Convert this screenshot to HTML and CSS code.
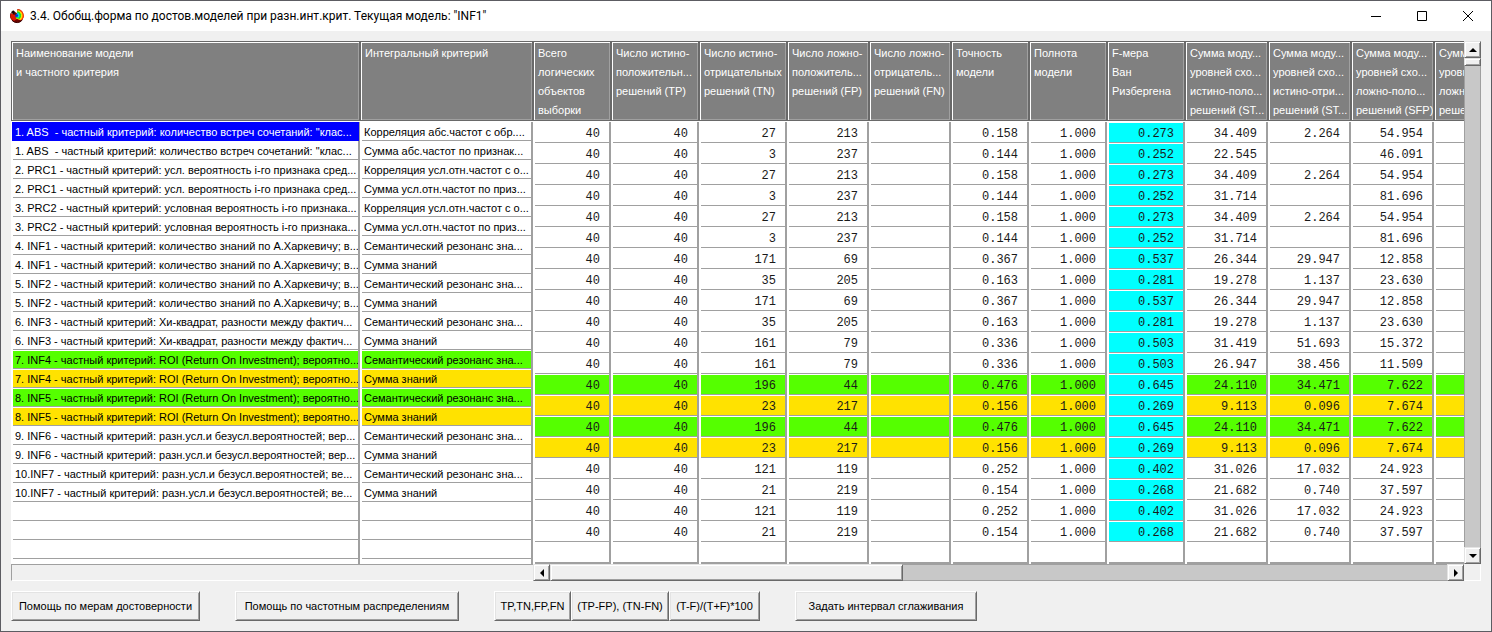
FILE: index.html
```html
<!DOCTYPE html>
<html lang="ru">
<head>
<meta charset="utf-8">
<title>3.4. Обобщ.форма по достов.моделей при разн.инт.крит.</title>
<link rel="stylesheet" href="styles.css">
</head>
<body>
<main class="window">
  <header class="titlebar">
    <svg class="app-icon" viewBox="0 0 16 16" aria-hidden="true">
      <path d="M8.500 1 A6.800 6.800 0 1 1 1.600 5 L4 6 L5.800 3.800 L7.800 5.200 Z" fill="#6a0500"/>
      <path d="M8.500 1.300 A6.400 6.400 0 0 1 12.500 12.600 L8 11 L8 7 Z" fill="#ff3a00"/>
      <path d="M1.800 5.600 A6.300 6.300 0 0 0 5 13 L8 11 L6 7 L3.600 6 Z" fill="#e01800"/>
      <path d="M8.500 2.200 A5.500 5.500 0 0 1 11.400 12 L7 10.500 Z" fill="#ffe000"/>
      <path d="M8.500 3 A4.700 4.700 0 0 1 10.600 11 L7 10 Z" fill="#20e020"/>
      <path d="M8.400 4.600 A3 3 0 0 1 9.400 9.800 L6.600 8.500 Z" fill="#00d8f0"/>
      <circle cx="7.600" cy="7.400" r="1.500" fill="#1030d0"/>
      <path d="M2 4.200 L4.200 2.200 L6.200 4 L4.400 6.400 Z" fill="#180000"/>
      <path d="M3 12.300 A6.600 6.600 0 0 0 13.300 12" fill="none" stroke="#3a0000" stroke-width="1"/>
    </svg>
    <h1 class="caption">3.4. Обобщ.форма по достов.моделей при разн.инт.крит. Текущая модель: "INF1"</h1>
    <button class="sys" aria-label="Свернуть"><svg viewBox="0 0 10 10"><path d="M0 5.500H10"/></svg></button>
    <button class="sys" aria-label="Развернуть"><svg viewBox="0 0 10 10"><path d="M.5 .5H9.500V9.500H.5Z"/></svg></button>
    <button class="sys" aria-label="Закрыть"><svg viewBox="0 0 10 10"><path d="M0 0L10 10M10 0L0 10"/></svg></button>
  </header>

  <section class="browser">
    <div class="pane pane-left">
      <div class="view">
        <table class="grid names" id="names">
          <colgroup><col class="w-model"><col class="w-crit"></colgroup>
          <thead><tr></tr></thead>
          <tbody></tbody>
        </table>
      </div>
      <div class="footer-strip"></div>
    </div>
    <div class="pane pane-right">
      <div class="view">
        <table class="grid values" id="values">
          <colgroup>
            <col class="w-s"><col class="w-l"><col class="w-l"><col class="w-m"><col class="w-m"><col class="w-s">
            <col class="w-s"><col class="w-s"><col class="w-x"><col class="w-x"><col class="w-x"><col class="w-x">
          </colgroup>
          <thead><tr></tr></thead>
          <tbody></tbody>
        </table>
      </div>
      <div class="scroll scroll-h">
        <button class="arrow" aria-label="Влево"><svg viewBox="0 0 8 8"><path d="M6 0V8L2 4Z"/></svg></button>
        <div class="track"><div class="thumb"></div></div>
        <button class="arrow" aria-label="Вправо"><svg viewBox="0 0 8 8"><path d="M2 0V8L6 4Z"/></svg></button>
      </div>
    </div>
    <div class="pane pane-scroll">
      <div class="scroll scroll-v">
        <button class="arrow" aria-label="Вверх"><svg viewBox="0 0 8 8"><path d="M0 6H8L4 2Z"/></svg></button>
        <div class="track"><div class="thumb"></div></div>
        <button class="arrow" aria-label="Вниз"><svg viewBox="0 0 8 8"><path d="M0 2H8L4 6Z"/></svg></button>
      </div>
      <div class="corner"></div>
    </div>
  </section>

  <footer class="actions">
    <button class="btn b-help">Помощь по мерам достоверности</button>
    <button class="btn b-freq">Помощь по частотным распределениям</button>
    <div class="group">
      <button class="btn b-tp">TP,TN,FP,FN</button>
      <button class="btn b-diff">(TP-FP), (TN-FN)</button>
      <button class="btn b-ratio">(T-F)/(T+F)*100</button>
    </div>
    <button class="btn b-smooth">Задать интервал сглаживания</button>
  </footer>
</main>
<script src="app.js"></script>
</body>
</html>
```

FILE: styles.css
```css
* { box-sizing: border-box; }

body {
  margin: 0;
  font-family: "Liberation Sans", Arial, sans-serif;
  font-size: 11px;
  color: #000;
  background: #f0f0f0;
}

button { font: inherit; color: inherit; padding: 0; }

.window {
  min-height: 100vh;
  border: 1px solid #5c5c62;
  background: #f0f0f0;
}

/* Title bar */
.titlebar {
  display: flex;
  align-items: center;
  height: 30px;
  background: #fff;
}
.app-icon { width: 16px; height: 16px; margin: 0 5px 0 8px; }
.caption {
  flex: 1;
  margin: 0;
  font: 400 12px/20px Roboto, "Noto Sans", sans-serif;
  white-space: nowrap;
}
.sys {
  display: flex;
  align-items: center;
  justify-content: center;
  width: 46px;
  height: 30px;
  border: 0;
  background: none;
}
.sys svg { width: 10px; height: 10px; overflow: visible; fill: none; stroke: #000; stroke-width: 1; }

/* Table browser */
.browser { display: flex; padding: 10px 10px 0; }
.pane { display: flex; flex-direction: column; }
.pane-left { flex: none; width: 522px; }
.pane-right { flex: 1; min-width: 0; }
.pane-scroll { flex: none; width: 17px; }
.view { flex: 1; overflow: hidden; background: #fff; }

.grid { border-collapse: separate; border-spacing: 0; table-layout: fixed; }
.names { width: 522px; }
.values { width: 984px; }
.w-model { width: 349px; }
.w-crit { width: 173px; }
.w-s { width: 78px; }
.w-m { width: 82px; }
.w-l { width: 88px; }
.w-x { width: 83px; }

.grid th, .grid td { padding: 0; font-weight: 400; white-space: pre; vertical-align: top; }
.grid th { padding-bottom: 1px; text-align: left; }
.head {
  height: 80px;
  border: 1px solid #696969;
  background: #808080;
  box-shadow: inset 1px 1px 0 #fff, inset -1px -1px 0 #a0a0a0;
  padding: 2px 0 0 4px;
  line-height: 19px;
  color: #fff;
  overflow: hidden;
}

.grid td { border-right: 2px solid #a0a0a0; background: #fff; }
.cell {
  margin: 1px 0 0 2px;
  border-bottom: 1px solid #a0a0a0;
  overflow: hidden;
}
.names .cell { height: 18px; line-height: 19px; padding-left: 2px; }
.values .cell {
  height: 20px;
  line-height: 22px;
  padding-right: 9px;
  text-align: right;
  font-family: "Liberation Mono", "Courier New", monospace;
  font-size: 12px;
  color: #1a1a1a;
}
.values tr:last-child .cell { height: 21px; border-bottom-width: 2px; }
.names tr.tail .cell { height: 4px; border-bottom: 0; }
.fmeasure { background: #00ffff; }
.good .cell { background: #55ff00; }
.warn .cell { background: #ffe200; }
.good .fmeasure, .warn .fmeasure { background: #00ffff; }
.names td.selected {
  background: #0000ff;
  border-right: 1px solid #a0a0a0;
  box-shadow: inset 1px 0 0 #fff;
  color: #fff;
}
.selected .cell { border-bottom-color: #0000ff; }

.footer-strip {
  height: 17px;
  border: solid #a0a0a0;
  border-width: 1px 0 1px 1px;
  border-bottom-color: #fff;
}
.corner { height: 17px; border: 1px solid; border-color: #f0f0f0 #fff #fff #f0f0f0; }

/* Scroll bars */
.scroll { display: flex; }
.scroll-h { height: 17px; }
.scroll-v { flex: 1; flex-direction: column; }
.track { display: flex; flex: 1; background: #c8c8c8; border: 0 solid #a0a0a0; }
.scroll-h .track { border-width: 1px 0; }
.scroll-v .track { flex-direction: column; border-width: 0 1px; }
.arrow, .thumb, .btn {
  border: 1px solid;
  border-color: #e3e3e3 #696969 #696969 #e3e3e3;
  border-radius: 0;
  background: #f0f0f0;
  box-shadow: inset 1px 1px 0 #fff, inset -1px -1px 0 #a0a0a0;
}
.arrow {
  display: flex;
  align-items: center;
  justify-content: center;
  flex: none;
  width: 17px;
  height: 17px;
}
.arrow svg { width: 8px; height: 8px; fill: #000; }
.scroll-h .thumb { width: 39.4%; margin: -1px 0; }
.scroll-v .thumb { height: 8px; margin: 0 -1px; }

/* Buttons under the table */
.actions { display: flex; gap: 35px; padding: 10px; }
.group { display: flex; }
.btn {
  height: 30px;
  border-color: #fff #696969 #696969 #fff;
  box-shadow: inset 1px 1px 0 #e3e3e3, inset -1px -1px 0 #a0a0a0;
  white-space: nowrap;
}
.b-help { width: 189px; }
.b-freq { width: 224px; }
.b-tp { width: 77px; }
.b-diff { width: 98px; }
.b-ratio { width: 91px; }
.b-smooth { width: 182px; }
```

FILE: app.js
```js
const CR = " - частный критерий: ";
const models = [
  ["1. ABS " + CR + "количество встреч сочетаний: \"клас...", "Корреляция абс.частот с обр....", "Сумма абс.частот по признак..."],
  ["2. PRC1" + CR + "усл. вероятность i-го признака сред...", "Корреляция усл.отн.частот с о...", "Сумма усл.отн.частот по приз..."],
  ["3. PRC2" + CR + "условная вероятность i-го признака...", "Корреляция усл.отн.частот с о...", "Сумма усл.отн.частот по приз..."],
  ["4. INF1" + CR + "количество знаний по А.Харкевичу; в..."],
  ["5. INF2" + CR + "количество знаний по А.Харкевичу; в..."],
  ["6. INF3" + CR + "Хи-квадрат, разности между фактич..."],
  ["7. INF4" + CR + "ROI (Return On Investment); вероятно..."],
  ["8. INF5" + CR + "ROI (Return On Investment); вероятно..."],
  ["9. INF6" + CR + "разн.усл.и безусл.вероятностей; вер..."],
  ["10.INF7" + CR + "разн.усл.и безусл.вероятностей; ве..."]
];
const marks = { 12: "good", 13: "warn", 14: "good", 15: "warn" };

const nameHeads = ["Наименование модели\nи частного критерия", "Интегральный критерий"];
const valueHeads = [
  "Всего\nлогических\nобъектов\nвыборки",
  "Число истино-\nположительн...\nрешений (TP)",
  "Число истино-\nотрицательных\nрешений (TN)",
  "Число ложно-\nположитель...\nрешений (FP)",
  "Число ложно-\nотрицатель...\nрешений (FN)",
  "Точность\nмодели",
  "Полнота\nмодели",
  "F-мера\nВан\nРизбергена",
  "Сумма моду...\nуровней схо...\nистино-поло...\nрешений (ST...",
  "Сумма моду...\nуровней схо...\nистино-отри...\nрешений (ST...",
  "Сумма моду...\nуровней схо...\nложно-поло...\nрешений (SFP)",
  "Сумма моду...\nуровней схо...\nложно-отри...\nрешений (SFN)"
];

/* TN, FP, precision, F-measure, STP, STN, SFP */
const results = `27 213 0.158 0.273 34.409 2.264 54.954
3 237 0.144 0.252 22.545 - 46.091
27 213 0.158 0.273 34.409 2.264 54.954
3 237 0.144 0.252 31.714 - 81.696
27 213 0.158 0.273 34.409 2.264 54.954
3 237 0.144 0.252 31.714 - 81.696
171 69 0.367 0.537 26.344 29.947 12.858
35 205 0.163 0.281 19.278 1.137 23.630
171 69 0.367 0.537 26.344 29.947 12.858
35 205 0.163 0.281 19.278 1.137 23.630
161 79 0.336 0.503 31.419 51.693 15.372
161 79 0.336 0.503 26.947 38.456 11.509
196 44 0.476 0.645 24.110 34.471 7.622
23 217 0.156 0.269 9.113 0.096 7.674
196 44 0.476 0.645 24.110 34.471 7.622
23 217 0.156 0.269 9.113 0.096 7.674
121 119 0.252 0.402 31.026 17.032 24.923
21 219 0.154 0.268 21.682 0.740 37.597
121 119 0.252 0.402 31.026 17.032 24.923
21 219 0.154 0.268 21.682 0.740 37.597`.split("\n").map(line => line.split(" ").map(v => v === "-" ? "" : v));

function addBox(row, tag, boxClass, text) {
  const outer = row.appendChild(document.createElement(tag));
  const box = outer.appendChild(document.createElement("div"));
  box.className = boxClass;
  box.textContent = text;
  return outer;
}

function addRow(body, cells, mark) {
  const row = body.insertRow();
  if (mark) row.className = mark;
  cells.forEach((text, i) => {
    const isF = body.parentNode.id === "values" && i === 7 && text;
    addBox(row, "td", isF ? "cell fmeasure" : "cell", text);
  });
  return row;
}

const names = document.getElementById("names");
nameHeads.forEach(t => addBox(names.tHead.rows[0], "th", "head", t));
models.forEach(([name, first = "Семантический резонанс зна...", second = "Сумма знаний"], m) => {
  addRow(names.tBodies[0], [name, first], marks[m * 2]);
  addRow(names.tBodies[0], [name, second], marks[m * 2 + 1]);
});
for (let i = 0; i < 3; i++) addRow(names.tBodies[0], ["", ""]);
addRow(names.tBodies[0], ["", ""], "tail");
names.tBodies[0].rows[0].cells[0].className = "selected";

const values = document.getElementById("values");
valueHeads.forEach(t => addBox(values.tHead.rows[0], "th", "head", t));
results.forEach(([tn, fp, prec, f, stp, stn, sfp], i) =>
  addRow(values.tBodies[0], ["40", "40", tn, fp, "", prec, "1.000", f, stp, stn, sfp, ""], marks[i]));
addRow(values.tBodies[0], Array(12).fill(""));
```
